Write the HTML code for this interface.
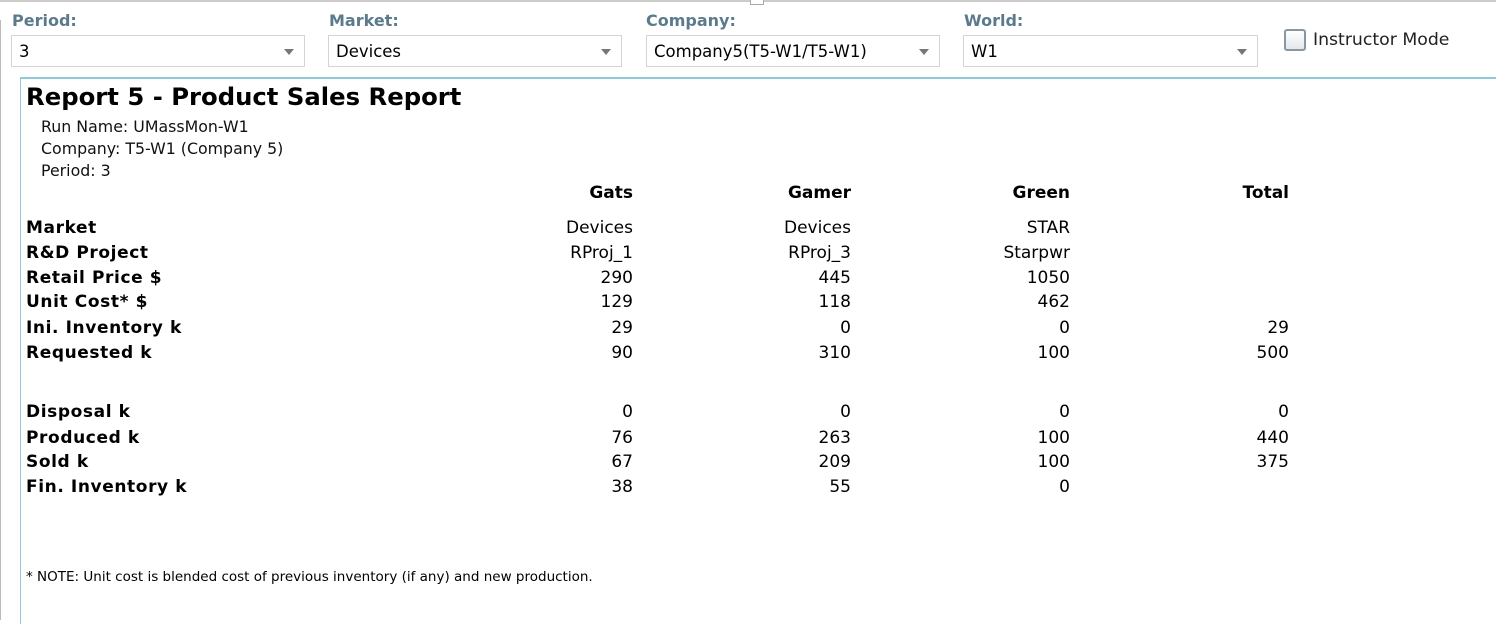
<!DOCTYPE html>
<html><head><style>
body{margin:0;width:1496px;height:616px;overflow:hidden;background:#fff;font-family:"DejaVu Sans","Liberation Sans",sans-serif;position:relative;color:#000}
.a{position:absolute;white-space:nowrap}
.lbl{font-weight:bold;color:#5b7b8c;font-size:16px;top:11px}
.sel{position:absolute;top:35px;height:32px;border:1px solid #d4d4d4;background:#fff;box-sizing:border-box;font-size:16.5px;line-height:32px;padding-left:7px}
.sel:after{content:"";position:absolute;right:10px;top:13px;border-left:5px solid transparent;border-right:5px solid transparent;border-top:6px solid #777}
.r{font-size:17px;position:absolute;line-height:20px}
.b{font-weight:bold;left:26px;letter-spacing:0.6px}
.n{text-align:right;width:200px}
</style></head><body>
<div class="a" style="left:0;top:0;width:1496px;height:2px;background:#ccc"></div>
<div class="a" style="left:750px;top:0;width:12px;height:4px;border:1px solid #aaa;border-top:0;background:#fff"></div>
<div class="a" style="left:0;top:20px;width:3px;height:600px;border-left:1px solid #bbb"></div>
<div class="a lbl" style="left:12px">Period:</div>
<div class="a lbl" style="left:329px">Market:</div>
<div class="a lbl" style="left:646px">Company:</div>
<div class="a lbl" style="left:964px">World:</div>
<div class="sel" style="left:11px;width:294px">3</div>
<div class="sel" style="left:328px;width:294px">Devices</div>
<div class="sel" style="left:646px;width:294px">Company5(T5-W1/T5-W1)</div>
<div class="sel" style="left:963px;width:295px">W1</div>
<div class="a" style="left:1284px;top:29px;width:18px;height:18px;border:2px solid #8a96a0;border-radius:3px;background:linear-gradient(#fff,#e4e8ec)"></div>
<div class="a" style="left:1313px;top:30px;font-size:17.3px;color:#222">Instructor Mode</div>
<div class="a" style="left:20px;top:77px;width:1476px;height:545px;border-top:2px solid #92c9da;border-left:1px solid #92c9da"></div>
<div class="a" style="left:26px;top:82px;font-size:24.3px;font-weight:bold">Report 5 - Product Sales Report</div>
<div class="a" style="left:41px;top:116px;font-size:15.8px;line-height:22px;color:#111">Run Name: UMassMon-W1<br>Company: T5-W1 (Company 5)<br>Period: 3</div>
<div class="r n" style="left:433px;top:183px;font-weight:bold">Gats</div>
<div class="r n" style="left:651px;top:183px;font-weight:bold">Gamer</div>
<div class="r n" style="left:870px;top:183px;font-weight:bold">Green</div>
<div class="r n" style="left:1089px;top:183px;font-weight:bold">Total</div>

<div class="r b" style="top:218px">Market</div>
<div class="r n" style="left:433px;top:218px">Devices</div><div class="r n" style="left:651px;top:218px">Devices</div><div class="r n" style="left:870px;top:218px">STAR</div>
<div class="r b" style="top:243px">R&amp;D Project</div>
<div class="r n" style="left:433px;top:243px">RProj_1</div><div class="r n" style="left:651px;top:243px">RProj_3</div><div class="r n" style="left:870px;top:243px">Starpwr</div>
<div class="r b" style="top:268px">Retail Price $</div>
<div class="r n" style="left:433px;top:268px">290</div><div class="r n" style="left:651px;top:268px">445</div><div class="r n" style="left:870px;top:268px">1050</div>
<div class="r b" style="top:292px">Unit Cost* $</div>
<div class="r n" style="left:433px;top:292px">129</div><div class="r n" style="left:651px;top:292px">118</div><div class="r n" style="left:870px;top:292px">462</div>
<div class="r b" style="top:318px">Ini. Inventory k</div>
<div class="r n" style="left:433px;top:318px">29</div><div class="r n" style="left:651px;top:318px">0</div><div class="r n" style="left:870px;top:318px">0</div><div class="r n" style="left:1089px;top:318px">29</div>
<div class="r b" style="top:343px">Requested k</div>
<div class="r n" style="left:433px;top:343px">90</div><div class="r n" style="left:651px;top:343px">310</div><div class="r n" style="left:870px;top:343px">100</div><div class="r n" style="left:1089px;top:343px">500</div>
<div class="r b" style="top:402px">Disposal k</div>
<div class="r n" style="left:433px;top:402px">0</div><div class="r n" style="left:651px;top:402px">0</div><div class="r n" style="left:870px;top:402px">0</div><div class="r n" style="left:1089px;top:402px">0</div>
<div class="r b" style="top:428px">Produced k</div>
<div class="r n" style="left:433px;top:428px">76</div><div class="r n" style="left:651px;top:428px">263</div><div class="r n" style="left:870px;top:428px">100</div><div class="r n" style="left:1089px;top:428px">440</div>
<div class="r b" style="top:452px">Sold k</div>
<div class="r n" style="left:433px;top:452px">67</div><div class="r n" style="left:651px;top:452px">209</div><div class="r n" style="left:870px;top:452px">100</div><div class="r n" style="left:1089px;top:452px">375</div>
<div class="r b" style="top:477px">Fin. Inventory k</div>
<div class="r n" style="left:433px;top:477px">38</div><div class="r n" style="left:651px;top:477px">55</div><div class="r n" style="left:870px;top:477px">0</div>
<div class="a" style="left:26px;top:569px;font-size:13.5px">* NOTE: Unit cost is blended cost of previous inventory (if any) and new production.</div>
</body></html>
